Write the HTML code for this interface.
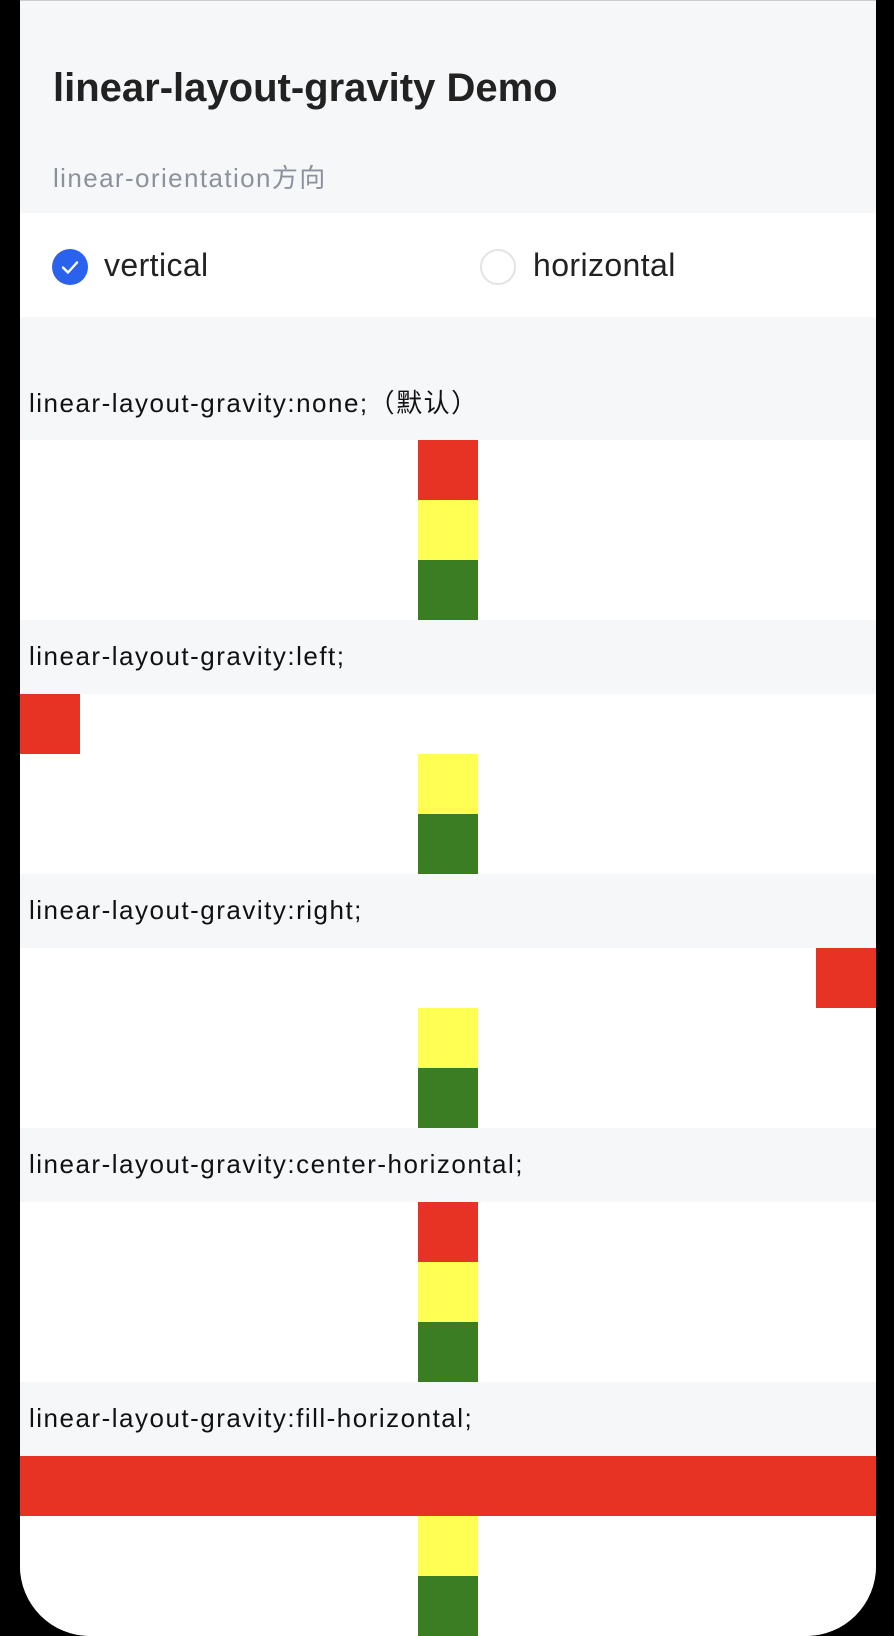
<!DOCTYPE html>
<html><head><meta charset="utf-8"><style>
html,body{margin:0;padding:0;background:#000;width:894px;height:1636px;overflow:hidden}
.app{position:absolute;left:20px;top:0;width:856px;height:1636px;background:#f6f7f9;border-bottom-left-radius:70px;border-bottom-right-radius:70px;overflow:hidden;border-top:1px solid #ccc;box-sizing:border-box;font-family:"Liberation Sans","Noto Sans CJK SC",sans-serif}
.t{position:absolute;left:33px;top:65px;font-size:40px;font-weight:bold;color:#222;letter-spacing:0}
.s{position:absolute;left:33px;top:157px;font-size:26px;color:#8c929c;letter-spacing:1.4px}
.row{position:absolute;left:0;top:212px;width:856px;height:104px;background:#fff}
.r{position:absolute;top:48px;width:36px;height:36px;border-radius:50%;box-sizing:border-box}
.lbl{position:absolute;top:34px;font-size:32px;color:#222;letter-spacing:0.4px}
.sec{position:absolute;left:0;width:856px;background:#fff}
.cap{position:absolute;left:9px;font-size:26px;color:#111;letter-spacing:1.5px}
.b{position:absolute;width:60px;height:60px}
.R{background:#e63323}.Y{background:#fffe52}.G{background:#3a7d23}
</style></head><body><div class="app">
<div class="t">linear-layout-gravity Demo</div>
<div class="s">linear-orientation方向</div>
<div class="row">
<div class="r" style="left:32px;top:36px;background:#2a62ee"><svg width="36" height="36" viewBox="0 0 36 36"><path d="M11 18.5l5 5 9-10" fill="none" stroke="#fff" stroke-width="2.4" stroke-linecap="round" stroke-linejoin="round"/></svg></div>
<div class="lbl" style="left:84px">vertical</div>
<div class="r" style="left:460px;top:36px;border:2px solid #e3e3e3"></div>
<div class="lbl" style="left:513px">horizontal</div>
</div>

<div class="cap" style="top:382px">linear-layout-gravity:none;（默认）</div>
<div class="sec" style="top:439px;height:180px"><div class="b R" style="left:398px;top:0"></div><div class="b Y" style="left:398px;top:60px"></div><div class="b G" style="left:398px;top:120px"></div></div>

<div class="cap" style="top:640px">linear-layout-gravity:left;</div>
<div class="sec" style="top:693px;height:180px"><div class="b R" style="left:0;top:0"></div><div class="b Y" style="left:398px;top:60px"></div><div class="b G" style="left:398px;top:120px"></div></div>

<div class="cap" style="top:894px">linear-layout-gravity:right;</div>
<div class="sec" style="top:947px;height:180px"><div class="b R" style="left:796px;top:0"></div><div class="b Y" style="left:398px;top:60px"></div><div class="b G" style="left:398px;top:120px"></div></div>

<div class="cap" style="top:1148px">linear-layout-gravity:center-horizontal;</div>
<div class="sec" style="top:1201px;height:180px"><div class="b R" style="left:398px;top:0"></div><div class="b Y" style="left:398px;top:60px"></div><div class="b G" style="left:398px;top:120px"></div></div>

<div class="cap" style="top:1402px">linear-layout-gravity:fill-horizontal;</div>
<div class="sec" style="top:1455px;height:181px"><div class="b R" style="left:0;top:0;width:856px"></div><div class="b Y" style="left:398px;top:60px"></div><div class="b G" style="left:398px;top:120px"></div></div>
</div></body></html>
